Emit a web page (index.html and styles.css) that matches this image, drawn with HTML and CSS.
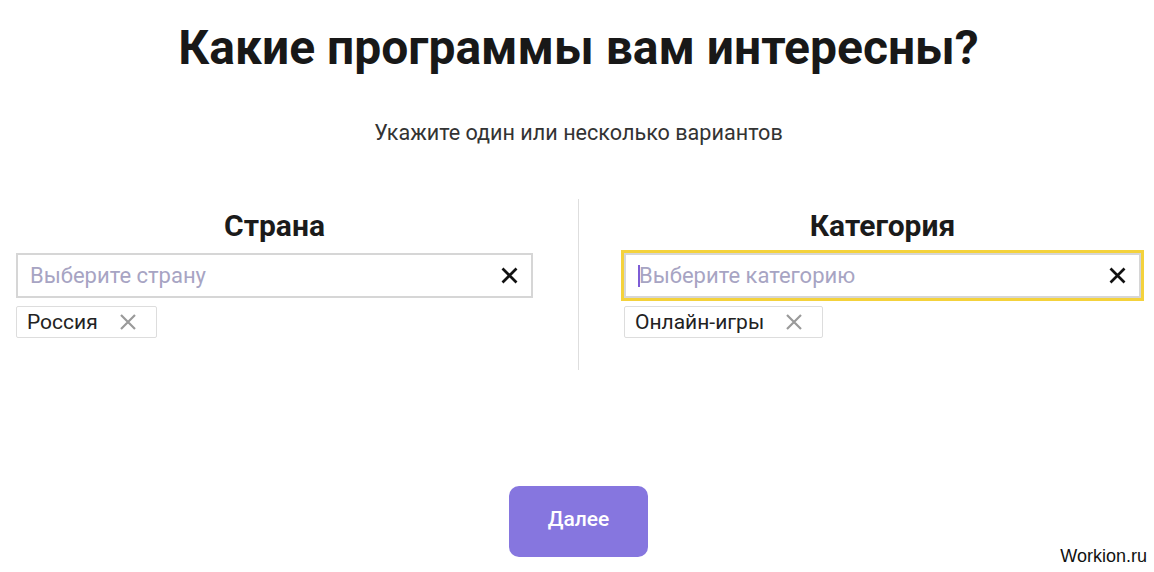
FILE: index.html
```html
<!DOCTYPE html>
<html lang="ru">
<head>
<meta charset="utf-8">
<title>Какие программы вам интересны?</title>
<link rel="stylesheet" href="styles.css">
</head>
<body>
<main class="page">
  <h1 class="title">Какие программы вам интересны?</h1>
  <p class="subtitle">Укажите один или несколько вариантов</p>

  <div class="columns">
    <section class="field">
      <h2 class="field-title">Страна</h2>
      <div class="select">
        <span class="placeholder">Выберите страну</span>
        <svg class="clear" viewBox="0 0 17 17" aria-hidden="true"><path d="M1.5 1.5L15.5 15.5M15.5 1.5L1.5 15.5"/></svg>
      </div>
      <div class="tags">
        <span class="tag">Россия<svg class="tag-x" viewBox="0 0 18 18" aria-hidden="true"><path d="M2 2L16 16M16 2L2 16"/></svg></span>
      </div>
    </section>

    <div class="divider"></div>

    <section class="field">
      <h2 class="field-title">Категория</h2>
      <div class="select is-focused">
        <span class="caret"></span><span class="placeholder">Выберите категорию</span>
        <svg class="clear" viewBox="0 0 17 17" aria-hidden="true"><path d="M1.5 1.5L15.5 15.5M15.5 1.5L1.5 15.5"/></svg>
      </div>
      <div class="tags">
        <span class="tag">Онлайн-игры<svg class="tag-x" viewBox="0 0 18 18" aria-hidden="true"><path d="M2 2L16 16M16 2L2 16"/></svg></span>
      </div>
    </section>
  </div>

  <div class="actions">
    <button class="next" type="button">Далее</button>
  </div>
</main>
<div class="watermark">Workion.ru</div>
</body>
</html>
```

FILE: styles.css
```css
html, body {
  margin: 0;
  padding: 0;
  background: #ffffff;
}

body {
  font-family: Roboto, "Noto Sans", "Liberation Sans", sans-serif;
  color: #1b1b1b;
  position: relative;
  min-height: 572px;
}

.page {
  padding: 20px 13px 0 16px;
  text-align: center;
}

.title {
  margin: 0;
  font-size: 48px;
  font-weight: 700;
  line-height: 56px;
  color: #181818;
}

.subtitle {
  margin: 45px 0 0;
  font-size: 21.6px;
  line-height: 24px;
  color: #333333;
}

.columns {
  display: grid;
  grid-template-columns: 1fr 1px 1fr;
  column-gap: 45px;
  margin-top: 54px;
}

.divider {
  background: #dedede;
}

.field {
  padding: 10px 0 32px;
}

.field-title {
  margin: 0 0 10px;
  font-size: 30px;
  font-weight: 700;
  line-height: 34px;
  color: #1b1b1b;
}

.select {
  display: flex;
  align-items: center;
  height: 45px;
  box-sizing: border-box;
  border: 2px solid #d6d6d6;
  padding: 0 12px;
  text-align: left;
}

.select.is-focused {
  outline: 3px solid #f4d23c;
}

.placeholder {
  flex: 1;
  font-size: 22px;
  color: #a7a4c3;
}

.caret {
  width: 2px;
  height: 22px;
  margin-right: -1px;
  background: #7d5cd6;
}

.clear {
  width: 17px;
  height: 17px;
  margin-right: 1px;
  fill: none;
  stroke: #111111;
  stroke-width: 2.7;
}

.tags {
  display: flex;
  margin-top: 8px;
}

.tag {
  display: inline-flex;
  align-items: center;
  gap: 21px;
  height: 32px;
  box-sizing: border-box;
  padding: 0 19px 0 10px;
  border: 1px solid #dddddd;
  border-radius: 2px;
  font-size: 21px;
  color: #222222;
}

.tag-x {
  width: 18px;
  height: 18px;
  fill: none;
  stroke: #9a9a9a;
  stroke-width: 2.2;
}

.actions {
  display: flex;
  justify-content: center;
  margin-top: 116px;
}

.next {
  width: 139px;
  height: 71px;
  padding: 0 0 6px;
  border: 0;
  border-radius: 10px;
  background: #8676df;
  color: #ffffff;
  font-family: Roboto, "Noto Sans", sans-serif;
  font-size: 21px;
  font-weight: 500;
}

.watermark {
  position: absolute;
  right: 7px;
  bottom: 5px;
  font-family: "Liberation Sans", Arial, sans-serif;
  font-size: 18px;
  color: #111111;
}
```
